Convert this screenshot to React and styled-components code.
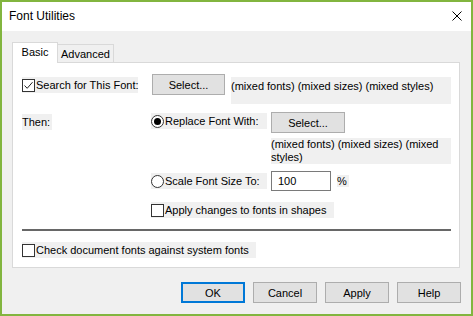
import React from "react";
import styled, { createGlobalStyle } from "styled-components";

const GlobalStyle = createGlobalStyle`
  html, body {
    margin: 0;
    padding: 0;
    background: #ffffff;
  }
  * {
    box-sizing: border-box;
  }
`;

const Window = styled.div`
  width: 473px;
  height: 316px;
  border: 2px solid #82b53f;
  display: flex;
  flex-direction: column;
  font-family: "Liberation Sans", Arial, sans-serif;
  font-size: 11px;
  color: #000;
`;

const TitleBar = styled.div`
  height: 29px;
  background: #ffffff;
  display: flex;
  align-items: center;
  justify-content: space-between;
  padding: 0 9px 1px 7px;
`;

const Title = styled.span`
  font-size: 12px;
`;

const Body = styled.div`
  flex: 1;
  background: #f0f0f0;
  display: flex;
  flex-direction: column;
  padding: 11px 11px 11px 10px;
`;

const TabStrip = styled.div`
  display: flex;
  align-items: flex-end;
  height: 20px;
`;

const Tab = styled.div`
  width: ${(p) => p.$w}px;
  height: ${(p) => (p.$active ? 21 : 18)}px;
  margin-bottom: ${(p) => (p.$active ? -1 : 0)}px;
  background: ${(p) => (p.$active ? "#ffffff" : "#f0f0f0")};
  border: 1px solid #d9d9d9;
  border-bottom: none;
  border-left: ${(p) => (p.$active ? "1px solid #d9d9d9" : "none")};
  position: relative;
  z-index: ${(p) => (p.$active ? 1 : 0)};
  display: flex;
  align-items: ${(p) => (p.$active ? "flex-start" : "center")};
  justify-content: center;
  padding-top: ${(p) => (p.$active ? 3 : 0)}px;
`;

const Panel = styled.div`
  flex: 1;
  background: #ffffff;
  border: 1px solid #d9d9d9;
  padding: 11px 8px 0 9px;
  display: flex;
  flex-direction: column;
`;

const Row = styled.div`
  display: flex;
  align-items: ${(p) => p.$align || "center"};
  margin-top: ${(p) => p.$top || 0}px;
`;

const Cell = styled.div`
  width: ${(p) => p.$w}px;
  flex-shrink: 0;
  padding-top: ${(p) => p.$pt || 0}px;
`;

const Label = styled.div`
  background: #f0f0f0;
  width: ${(p) => p.$w}px;
  height: ${(p) => p.$h || 16}px;
  line-height: ${(p) => p.$lh || 16}px;
  margin-top: ${(p) => p.$top || 0}px;
  margin-left: ${(p) => p.$left || 0}px;
  padding-top: ${(p) => p.$pt || 0}px;
  white-space: ${(p) => (p.$wrap ? "normal" : "nowrap")};
  flex-shrink: 0;
`;

const Choice = styled.label`
  background: #f0f0f0;
  width: ${(p) => p.$w}px;
  height: 16px;
  margin-top: ${(p) => p.$top || 0}px;
  display: flex;
  align-items: center;
  gap: 1px;
  flex-shrink: 0;
  white-space: nowrap;
`;

const Box = styled.span`
  width: 13px;
  height: 13px;
  border: 1px solid #333333;
  background: #ffffff;
  display: flex;
  align-items: center;
  justify-content: center;
  flex-shrink: 0;
`;

const Round = styled.span`
  width: 13px;
  height: 13px;
  border: 1px solid #333333;
  border-radius: 50%;
  background: #ffffff;
  display: flex;
  align-items: center;
  justify-content: center;
  flex-shrink: 0;
`;

const Dot = styled.span`
  width: 7px;
  height: 7px;
  border-radius: 50%;
  background: #000000;
`;

const Button = styled.button`
  width: ${(p) => p.$w}px;
  height: 21px;
  margin-left: ${(p) => p.$left || 0}px;
  background: #e1e1e1;
  border: ${(p) => (p.$default ? "2px solid #0078d7" : "1px solid #adadad")};
  font-family: inherit;
  font-size: 11px;
  color: #000;
  padding: 0;
  flex-shrink: 0;
`;

const TextInput = styled.div`
  width: 60px;
  height: 20px;
  border: 1px solid #7a7a7a;
  background: #ffffff;
  padding-left: 6px;
  line-height: 18px;
`;

const Separator = styled.div`
  height: 2px;
  background: #676767;
  margin-top: 11px;
`;

const Footer = styled.div`
  display: flex;
  justify-content: flex-end;
  gap: 8px;
  margin-top: 14px;
  margin-right: -1px;
`;

function CheckBox({ checked }) {
  return (
    <Box>
      {checked && (
        <svg width="11" height="11" viewBox="0 0 11 11">
          <path d="M1.5 5.5 L4.2 8.3 L9.5 2.2" fill="none" stroke="#222" strokeWidth="1" />
        </svg>
      )}
    </Box>
  );
}

function Radio({ checked }) {
  return <Round>{checked && <Dot />}</Round>;
}

export default function App() {
  return (
    <>
      <GlobalStyle />
      <Window>
        <TitleBar>
          <Title>Font Utilities</Title>
          <svg width="10" height="10" viewBox="0 0 10 10">
            <path d="M0.5 0.5 L9.5 9.5 M9.5 0.5 L0.5 9.5" stroke="#000" strokeWidth="1" />
          </svg>
        </TitleBar>
        <Body>
          <TabStrip>
            <Tab $active $w={46}>Basic</Tab>
            <Tab $w={56}>Advanced</Tab>
          </TabStrip>
          <Panel>
            <Row $align="flex-start">
              <Choice $w={116} $top={3}>
                <CheckBox checked />
                Search for This Font:
              </Choice>
              <Button $w={73} $left={14}>Select...</Button>
              <Label $w={220} $h={27} $lh={13} $top={3} $left={6} $pt={3}>
                (mixed fonts) (mixed sizes) (mixed styles)
              </Label>
            </Row>
            <Row $top={8} $align="flex-start">
              <Cell $w={129} $pt={2}>
                <Label $w={30}>Then:</Label>
              </Cell>
              <Cell $w={120} $pt={1}>
                <Choice $w={116}>
                  <Radio checked />
                  Replace Font With:
                </Choice>
              </Cell>
              <Button $w={74}>Select...</Button>
            </Row>
            <Row $top={5}>
              <Cell $w={249} />
              <Label $w={180} $h={26} $lh={13} $wrap>
                (mixed fonts) (mixed sizes) (mixed styles)
              </Label>
            </Row>
            <Row $top={7}>
              <Cell $w={129} />
              <Cell $w={120}>
                <Choice $w={116}>
                  <Radio />
                  Scale Font Size To:
                </Choice>
              </Cell>
              <TextInput>100</TextInput>
              <Label $w={12} $h={12} $lh={12} $left={6}>%</Label>
            </Row>
            <Row $top={11}>
              <Cell $w={129} />
              <Choice $w={183}>
                <CheckBox />
                Apply changes to fonts in shapes
              </Choice>
            </Row>
            <Separator />
            <Row $top={11}>
              <Choice $w={234}>
                <CheckBox />
                Check document fonts against system fonts
              </Choice>
            </Row>
          </Panel>
          <Footer>
            <Button $w={64} $default>OK</Button>
            <Button $w={64}>Cancel</Button>
            <Button $w={64}>Apply</Button>
            <Button $w={64}>Help</Button>
          </Footer>
        </Body>
      </Window>
    </>
  );
}
